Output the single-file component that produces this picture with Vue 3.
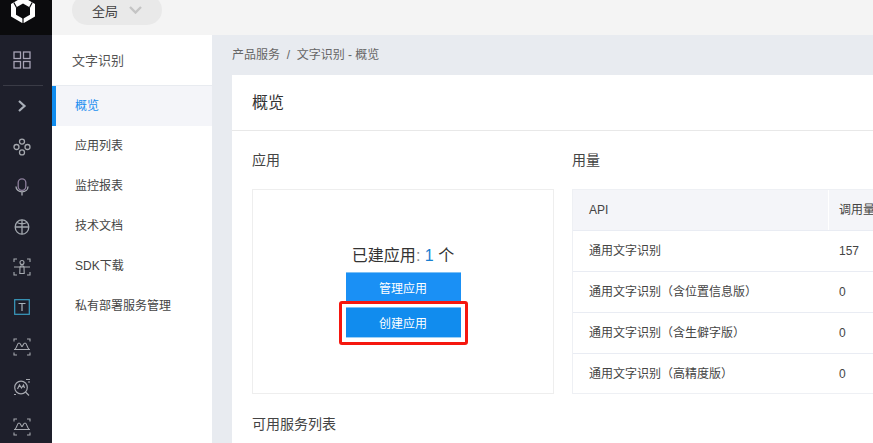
<script setup>
const menu = ['概览', '应用列表', '监控报表', '技术文档', 'SDK下载', '私有部署服务管理']
const rows = [
  ['通用文字识别', '157'],
  ['通用文字识别（含位置信息版）', '0'],
  ['通用文字识别（含生僻字版）', '0'],
  ['通用文字识别（高精度版）', '0'],
]
</script>

<template>
  <div class="page">
    <aside class="rail">
      <div class="logo">
        <svg width="24" height="23" viewBox="0 0 24 23">
          <path fill-rule="evenodd" d="M12 -3 24 4V16.500L12 23.500 0 16.500V4ZM12 3.500 5 7.500V14.800L12 18.800 19 14.800V7.500Z" fill="#fff"/>
          <path d="M12 18V23.500M2.800 2.500 5.500 7.500M21.200 2.500 18.500 7.500" stroke="#0b0b0d" stroke-width="1.200"/>
        </svg>
      </div>
      <div class="rail-item first">
        <svg width="18" height="18" viewBox="0 0 18 18" fill="none" stroke="#a7a3b5" stroke-width="1.3"><rect x="1" y="1" width="6.500" height="6.500"/><rect x="10.500" y="1" width="6.500" height="6.500"/><rect x="1" y="10.500" width="6.500" height="6.500"/><rect x="10.500" y="10.500" width="6.500" height="6.500"/></svg>
      </div>
      <div class="rail-sep"></div>
      <div class="rail-toggle">
        <svg width="10" height="12" viewBox="0 0 10 12" fill="none" stroke="#a9afb9" stroke-width="2.200"><path d="M2 1 7.500 6 2 11"/></svg>
      </div>
      <div class="rail-item">
        <svg width="18" height="18" viewBox="0 0 18 18" fill="none" stroke="#a5a8ae" stroke-width="1.300"><circle cx="9" cy="3.600" r="2.500"/><circle cx="3.500" cy="9" r="2.500"/><circle cx="14.500" cy="9" r="2.500"/><circle cx="9" cy="14.400" r="2.500"/></svg>
      </div>
      <div class="rail-item">
        <svg width="14" height="18" viewBox="0 0 14 18" fill="none" stroke-width="1.300"><rect x="3.200" y="0.800" width="7.600" height="11.500" rx="3.800" stroke="#8d7f9c"/><path d="M1 8.500c0 3.200 2.600 5.300 6 5.300s6-2.100 6-5.300M7 13.800V17.500" stroke="#a8abb3"/></svg>
      </div>
      <div class="rail-item">
        <svg width="16" height="18" viewBox="0 0 16 18" fill="none" stroke="#a3a8af" stroke-width="1.300"><ellipse cx="8" cy="9" rx="6.800" ry="7.200"/><path d="M1.200 9H14.800M8 1.800V16.200M3 4.500C6 6 10 6 13 4.500"/></svg>
      </div>
      <div class="rail-item">
        <svg width="18" height="18" viewBox="0 0 18 18" fill="none" stroke="#a7abb1" stroke-width="1.100"><path d="M1 4V1H4M14 1H17V4M1 14V17H4M14 17H17V14M1 9H17"/><circle cx="9" cy="4.500" r="2"/><path d="M6.800 15.500 7 9C7 7.500 11 7.500 11 9L11.200 15.500Z"/></svg>
      </div>
      <div class="rail-item">
        <svg width="16" height="16" viewBox="0 0 16 16" fill="none"><rect x="0.700" y="0.700" width="14.600" height="14.600" stroke="#3a9cc0" stroke-width="1.200"/><path d="M4.500 4.500H11.500M8 4.500V12" stroke="#a8b4bc" stroke-width="1.200"/></svg>
      </div>
      <div class="rail-item">
        <svg width="18" height="18" viewBox="0 0 18 18" fill="none" stroke="#a7a9b0" stroke-width="1.100"><path d="M1 3.500V1H4M14 1H17V3.500M1 14.500V17H4M14 17H17V14.500M1 11.500H17"/><path d="M2 11C4 10 4 5 6 5S8 8.500 9 8.500 10 5 12 5 14 10 16 11"/></svg>
      </div>
      <div class="rail-item">
        <svg width="18" height="18" viewBox="0 0 18 18" fill="none" stroke="#a7a9b0" stroke-width="1.200"><circle cx="8" cy="9.500" r="6.300"/><path d="M4.500 11 6.500 7 8.500 10 10.500 7 11.500 10M12.500 14 16 17.500M13 1.500H17M15 4H17M1 16.500H3"/></svg>
      </div>
      <div class="rail-item">
        <svg width="18" height="18" viewBox="0 0 18 18" fill="none" stroke="#a7a9b0" stroke-width="1.100"><path d="M1 3.500V1H4M14 1H17V3.500M1 14.500V17H4M14 17H17V14.500M1 11.500H17"/><path d="M2 11C4 10 4 5 6 5S8 8.500 9 8.500 10 5 12 5 14 10 16 11"/></svg>
      </div>
    </aside>

    <div class="main">
      <header class="topbar">
        <div class="scope">
          <span>全局</span>
          <svg width="13" height="8" viewBox="0 0 13 8" fill="none" stroke="#c4c4c4" stroke-width="2.400"><path d="M1 1 6.500 6.500 12 1"/></svg>
        </div>
      </header>

      <div class="body">
        <nav class="side">
          <div class="side-title">文字识别</div>
          <div v-for="(m, i) in menu" :key="m" class="side-item" :class="{ active: i === 0 }">{{ m }}</div>
        </nav>

        <section class="content">
          <div class="crumbs">产品服务&nbsp;&nbsp;/&nbsp;&nbsp;文字识别 - 概览</div>
          <div class="card">
            <div class="card-head">概览</div>
            <div class="card-body">
              <div class="cols">
                <div class="col-app">
                  <h3>应用</h3>
                  <div class="app-box">
                    <div class="app-count">已建应用<span class="colon">:</span> <span class="num">1</span> 个</div>
                    <button class="btn">管理应用</button>
                    <div class="mark-wrap">
                      <button class="btn pressed">创建应用</button>
                      <div class="mark"></div>
                    </div>
                  </div>
                </div>
                <div class="col-use">
                  <h3>用量</h3>
                  <div class="table">
                    <div class="tr th">
                      <div class="c1">API</div>
                      <div class="c2">调用量</div>
                    </div>
                    <div v-for="r in rows" :key="r[0]" class="tr">
                      <div class="c1">{{ r[0] }}</div>
                      <div class="c2">{{ r[1] }}</div>
                    </div>
                  </div>
                </div>
              </div>
              <h3 class="services">可用服务列表</h3>
            </div>
          </div>
        </section>
      </div>
    </div>
  </div>
</template>

<style>
html, body { margin: 0; overflow: hidden; }
</style>

<style scoped>
.page {
  display: flex;
  width: 873px;
  height: 443px;
  overflow: hidden;
  font-family: "Liberation Sans", "Noto Sans CJK SC", sans-serif;
  color: #333;
  font-size: 12px;
}
.rail {
  width: 52px;
  flex: none;
  background: #1e1f2b;
  display: flex;
  flex-direction: column;
  align-items: center;
  overflow: hidden;
}
.logo {
  width: 100%;
  height: 35px;
  flex: none;
  background: #0b0b0d;
  display: flex;
  justify-content: center;
  align-items: flex-start;
}
.logo svg { display: block; margin-right: 6px; }
.rail-item {
  height: 40px;
  width: 100%;
  flex: none;
  display: flex;
  align-items: center;
  justify-content: center;
  padding-right: 8px;
  box-sizing: border-box;
}
.rail-item.first { height: 50px; }
.rail-sep {
  width: 40px;
  height: 1px;
  margin-right: 6px;
  background: #3a3b46;
  flex: none;
}
.rail-toggle {
  height: 39px;
  flex: none;
  display: flex;
  align-items: center;
  margin: 0 8px 2px 0;
}
.main {
  flex: 1;
  min-width: 0;
  display: flex;
  flex-direction: column;
}
.topbar {
  height: 35px;
  flex: none;
  background: #f4f4f4;
  padding-left: 20px;
  box-sizing: border-box;
  overflow: hidden;
}
.scope {
  width: 90px;
  height: 30px;
  margin-top: -5px;
  background: #e9e9e9;
  border-radius: 15px;
  display: flex;
  align-items: center;
  padding-left: 20px;
  box-sizing: border-box;
  gap: 11px;
  font-size: 13px;
  color: #444;
}
.body {
  flex: 1;
  display: flex;
  min-height: 0;
}
.side {
  width: 160px;
  flex: none;
  background: #fff;
  margin-top: 1px;
}
.side-title {
  height: 49px;
  line-height: 49px;
  padding-left: 20px;
  font-size: 13px;
  color: #555;
  border-bottom: 1px solid #e8ebf0;
}
.side-item {
  height: 40px;
  line-height: 40px;
  padding-left: 23px;
  font-size: 12px;
  color: #444;
}
.side-item.active {
  background: #f4f5f9;
  color: #1a8ff0;
  border-left: 4px solid #108cee;
  padding-left: 19px;
}
.content {
  flex: 1;
  min-width: 0;
  background: #e8ebf0;
  padding-left: 20px;
}
.crumbs {
  height: 40px;
  line-height: 41px;
  font-size: 12px;
  color: #666;
}
.card {
  background: #fff;
  width: 700px;
  height: 400px;
}
.card-head {
  height: 56px;
  line-height: 56px;
  padding-left: 20px;
  font-size: 16px;
  color: #333;
  border-bottom: 1px solid #e8e8e8;
  box-sizing: border-box;
}
.card-body {
  padding: 0 20px;
}
.cols {
  display: flex;
  gap: 18px;
}
h3 {
  margin: 0;
  font-weight: 400;
  font-size: 14px;
  color: #444;
  height: 58px;
  line-height: 58px;
}
.col-app { width: 302px; flex: none; }
.col-use { flex: 1; min-width: 0; }
.app-box {
  box-sizing: border-box;
  height: 205px;
  border: 1px solid #eee;
  display: flex;
  flex-direction: column;
  align-items: center;
  padding-top: 54px;
}
.app-count {
  font-size: 16px;
  line-height: 24px;
  height: 28px;
  color: #333;
}
.colon { color: #888; }
.num { color: #1a7fd0; }
.btn {
  display: block;
  width: 115px;
  height: 30px;
  border: 0;
  padding: 0;
  border-top: 1px solid #7cc0f5;
  background: #1a90f5;
  color: #fff;
  font: inherit;
  font-size: 12px;
}
.mark-wrap {
  position: relative;
  margin-top: 5px;
}
.btn.pressed {
  background: #118cee;
  border-bottom: 1px solid #9fd0f5;
  height: 31px;
}
.mark {
  position: absolute;
  left: -7px;
  top: -6px;
  width: 129px;
  height: 44px;
  box-sizing: border-box;
  border: 3px solid #f5170f;
  border-radius: 3px;
}
.table {
  width: 400px;
  box-sizing: border-box;
  height: 205px;
  border: 1px solid #eef0f4;
}
.tr {
  display: flex;
  height: 41px;
  line-height: 40px;
  border-bottom: 1px solid #e9ecf3;
  box-sizing: border-box;
  font-size: 12px;
  color: #444;
}
.tr:last-child { border-bottom: 0; }
.th { background: #f4f5f9; }
.c1 { width: 255px; padding-left: 16px; box-sizing: border-box; flex: none; }
.c2 { padding-left: 11px; flex: 1; white-space: nowrap; }
.th .c2 { border-left: 1px solid #fff; padding-left: 10px; }
.services { height: 40px; line-height: 60px; }
</style>
